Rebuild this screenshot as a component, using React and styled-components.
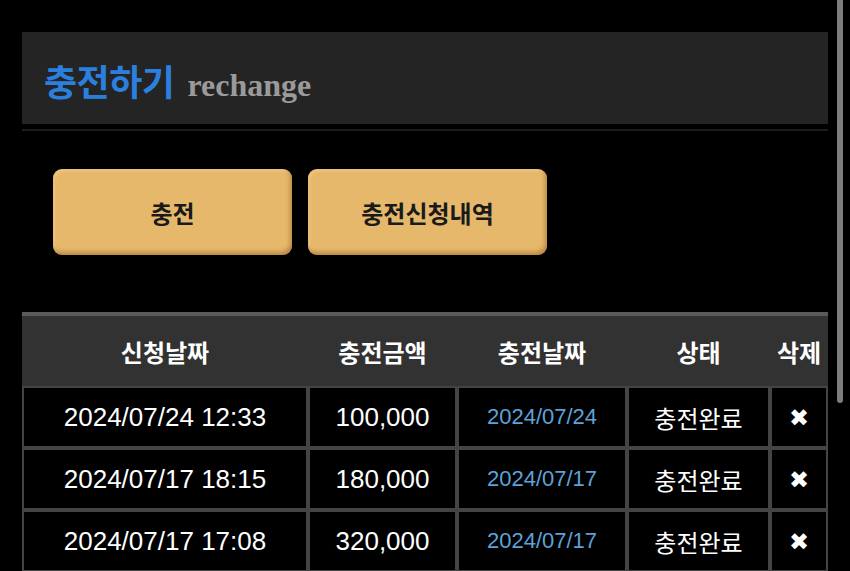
import React from 'react'
import styled, { createGlobalStyle } from 'styled-components'

const GlobalStyle = createGlobalStyle`
  html, body {
    margin: 0;
    padding: 0;
    background: #000;
    overflow: hidden;
  }
  body {
    font-family: "Liberation Sans", "Noto Sans CJK KR", sans-serif;
    color: #fff;
  }
`

const Page = styled.div`
  width: 806px;
  padding: 32px 0 0 22px;
`

const TitleBar = styled.div`
  height: 92px;
  background: #242424;
  display: flex;
  align-items: center;
  padding-left: 22px;
  padding-top: 4px;
  box-sizing: border-box;
`

const Title = styled.h1`
  margin: 0;
  font-family: "Noto Sans CJK KR", sans-serif;
  font-size: 36px;
  font-weight: 700;
  color: #2b80df;
  letter-spacing: -0.5px;
  display: flex;
  align-items: baseline;
`

const SubTitle = styled.span`
  font-family: "Liberation Serif", serif;
  font-size: 32px;
  font-weight: 700;
  color: #9a9a9a;
  margin-left: 13px;
  letter-spacing: 0;
`

const Divider = styled.div`
  height: 2px;
  margin-top: 5px;
  background: #1d1d1f;
`

const ButtonRow = styled.div`
  display: flex;
  gap: 16px;
  padding: 38px 0 0 31px;
`

const ActionButton = styled.button`
  width: 239px;
  height: 86px;
  border: none;
  border-radius: 9px;
  background: #e6b86c;
  box-shadow: inset -2px -3px 4px rgba(150, 100, 30, 0.55),
    inset 2px 2px 3px rgba(255, 230, 170, 0.35);
  font-family: "Noto Sans CJK KR", sans-serif;
  font-size: 24px;
  font-weight: 700;
  color: #1a1a1a;
  cursor: pointer;
  padding: 0;
`

const Table = styled.table`
  margin-top: 57px;
  width: 806px;
  border-collapse: separate;
  border-spacing: 0;
  table-layout: fixed;
`

const Th = styled.th`
  height: 70px;
  padding: 0;
  background: #323232;
  border-top: 4px solid #5a5a5a;
  font-family: "Noto Sans CJK KR", sans-serif;
  font-size: 24px;
  font-weight: 700;
  color: #fff;
  text-align: center;
`

const Td = styled.td`
  height: 58px;
  padding: 0;
  border: 2px solid #444;
  background: #000;
  text-align: center;
  font-family: ${(p) =>
    p.$kr ? '"Noto Sans CJK KR", sans-serif' : '"Liberation Sans", sans-serif'};
  font-size: ${(p) => (p.$blue ? '22px' : p.$kr ? '24px' : '26px')};
  color: ${(p) => (p.$blue ? '#5ea2d9' : '#fff')};
`

const DeleteMark = styled.span`
  font-family: "DejaVu Sans", sans-serif;
  font-size: 24px;
  font-weight: 700;
  color: #fff;
  cursor: pointer;
`

const ScrollThumb = styled.div`
  position: fixed;
  top: 0;
  left: 837px;
  width: 6px;
  height: 403px;
  background: #7d7d7d;
  border-radius: 0 0 3px 3px;
`

const rows = [
  { req: '2024/07/24 12:33', amount: '100,000', date: '2024/07/24', status: '충전완료' },
  { req: '2024/07/17 18:15', amount: '180,000', date: '2024/07/17', status: '충전완료' },
  { req: '2024/07/17 17:08', amount: '320,000', date: '2024/07/17', status: '충전완료' },
]

export default function App() {
  return (
    <>
      <GlobalStyle />
      <Page>
        <TitleBar>
          <Title>
            충전하기<SubTitle>rechange</SubTitle>
          </Title>
        </TitleBar>
        <Divider />
        <ButtonRow>
          <ActionButton>충전</ActionButton>
          <ActionButton>충전신청내역</ActionButton>
        </ButtonRow>
        <Table>
          <colgroup>
            <col style={{ width: 286 }} />
            <col style={{ width: 149 }} />
            <col style={{ width: 170 }} />
            <col style={{ width: 143 }} />
            <col style={{ width: 58 }} />
          </colgroup>
          <thead>
            <tr>
              <Th>신청날짜</Th>
              <Th>충전금액</Th>
              <Th>충전날짜</Th>
              <Th>상태</Th>
              <Th>삭제</Th>
            </tr>
          </thead>
          <tbody>
            {rows.map((r, i) => (
              <tr key={i}>
                <Td>{r.req}</Td>
                <Td>{r.amount}</Td>
                <Td $blue>{r.date}</Td>
                <Td $kr>{r.status}</Td>
                <Td>
                  <DeleteMark>✖</DeleteMark>
                </Td>
              </tr>
            ))}
          </tbody>
        </Table>
      </Page>
      <ScrollThumb />
    </>
  )
}
